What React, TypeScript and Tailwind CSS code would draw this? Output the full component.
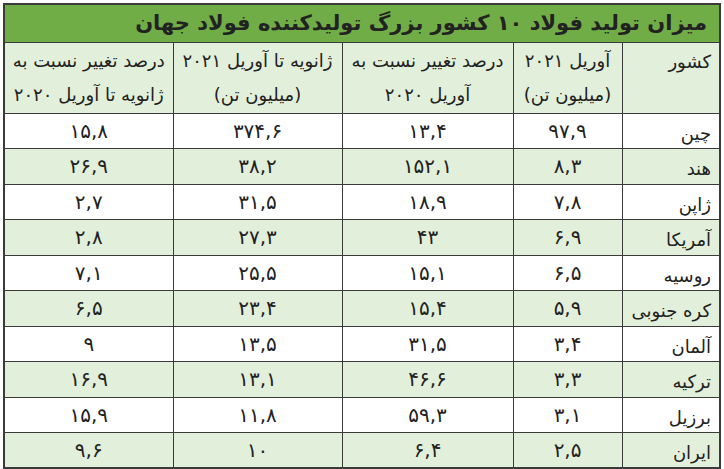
const rows: [string, string, string, string, string][] = [
  ["چین", "۹۷,۹", "۱۳,۴", "۳۷۴,۶", "۱۵,۸"],
  ["هند", "۸,۳", "۱۵۲,۱", "۳۸,۲", "۲۶,۹"],
  ["ژاپن", "۷,۸", "۱۸,۹", "۳۱,۵", "۲,۷"],
  ["آمریکا", "۶,۹", "۴۳", "۲۷,۳", "۲,۸"],
  ["روسیه", "۶,۵", "۱۵,۱", "۲۵,۵", "۷,۱"],
  ["کره جنوبی", "۵,۹", "۱۵,۴", "۲۳,۴", "۶,۵"],
  ["آلمان", "۳,۴", "۳۱,۵", "۱۳,۵", "۹"],
  ["ترکیه", "۳,۳", "۴۶,۶", "۱۳,۱", "۱۶,۹"],
  ["برزیل", "۳,۱", "۵۹,۳", "۱۱,۸", "۱۵,۹"],
  ["ایران", "۲,۵", "۶,۴", "۱۰", "۹,۶"],
];

const cell = "border border-[#3a3a3a] p-0";

export default function App() {
  return (
    <div className="w-[724px] h-[469px] bg-white p-[3px] font-['DejaVu_Sans',sans-serif] text-[#222]">
      <table dir="rtl" className="w-[716px] table-fixed border-collapse border-2 border-[#3a3a3a]">
        <colgroup>
          <col className="w-[98px]" />
          <col className="w-[109px]" />
          <col className="w-[171px]" />
          <col className="w-[169px]" />
          <col className="w-[169px]" />
        </colgroup>
        <thead>
          <tr className="h-[38px] bg-[#70ad47]">
            <th colSpan={5} className={`${cell} pr-3 text-right text-[21px] font-bold`}>
              میزان تولید فولاد ۱۰ کشور بزرگ تولیدکننده فولاد جهان
            </th>
          </tr>
          <tr className="h-[71px] bg-[#e2efda] text-[18px] leading-[34px]">
            <th className={`${cell} pr-2 text-right align-top pt-[2px] font-normal`}>کشور</th>
            <th className={`${cell} text-center font-normal`}>
              <div>آوریل ۲۰۲۱</div>
              <div>(میلیون تن)</div>
            </th>
            <th className={`${cell} text-center font-normal`}>
              <div>درصد تغییر نسبت به</div>
              <div>آوریل ۲۰۲۰</div>
            </th>
            <th className={`${cell} text-center font-normal`}>
              <div>ژانویه تا آوریل ۲۰۲۱</div>
              <div>(میلیون تن)</div>
            </th>
            <th className={`${cell} text-center font-normal`}>
              <div>درصد تغییر نسبت به</div>
              <div>ژانویه تا آوریل ۲۰۲۰</div>
            </th>
          </tr>
        </thead>
        <tbody className="text-[20px] leading-none">
          {rows.map((r, i) => (
            <tr key={r[0]} className={`h-[35.5px] ${i % 2 === 1 ? "bg-[#e2efda]" : "bg-white"}`}>
              <td className={`${cell} pr-2 pt-[6px] text-right text-[18px]`}>{r[0]}</td>
              <td className={`${cell} text-center`}>{r[1]}</td>
              <td className={`${cell} text-center`}>{r[2]}</td>
              <td className={`${cell} text-center`}>{r[3]}</td>
              <td className={`${cell} text-center`}>{r[4]}</td>
            </tr>
          ))}
        </tbody>
      </table>
    </div>
  );
}
